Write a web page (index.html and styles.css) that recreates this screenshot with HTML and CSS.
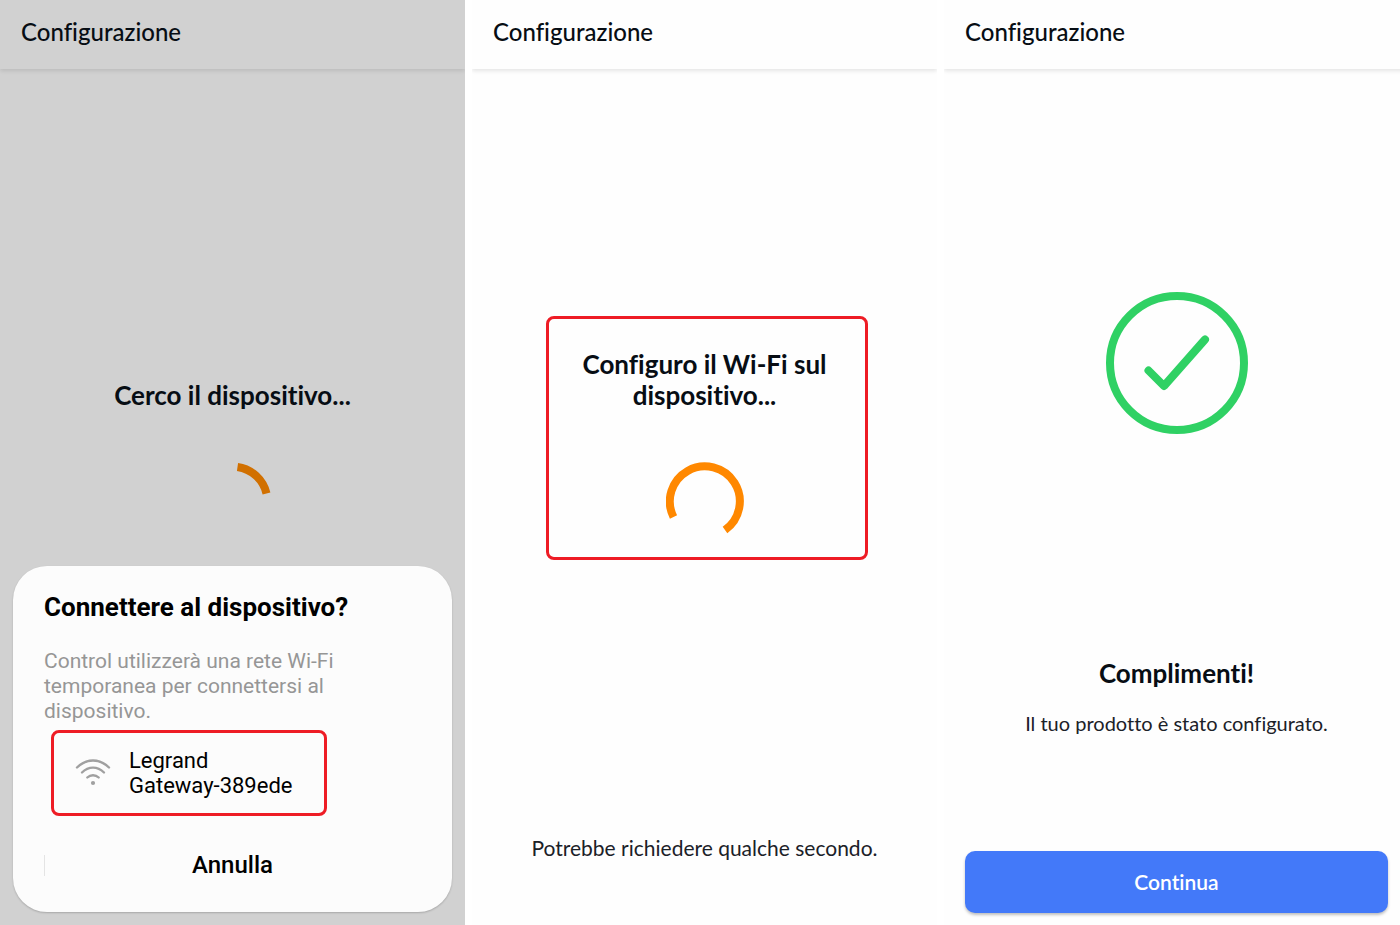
FILE: index.html
```html
<!DOCTYPE html>
<html lang="it">

<head>
    <meta charset="UTF-8">
    <meta name="viewport" content="width=device-width, initial-scale=1.0">
    <title>Configurazione</title>
    <link rel="stylesheet" href="styles.css">
</head>

<body>
    <div class="screens">

        <section class="screen dimmed">
            <header class="topbar">
                <h1>Configurazione</h1>
            </header>
            <div class="status">
                <h2>Cerco il dispositivo...</h2>
                <svg class="spinner" viewBox="0 0 78 78" fill="none" stroke="#d17000" stroke-width="8">
                    <path d="M43.5 5A35 35 0 0 1 72.5 31.5" />
                </svg>
            </div>

            <div class="sheet" role="dialog" aria-labelledby="sheet-title">
                <h2 id="sheet-title">Connettere al dispositivo?</h2>
                <p>Control utilizzerà una rete Wi-Fi temporanea per connettersi al dispositivo.</p>
                <button type="button" class="network highlight">
                    <svg class="wifi" viewBox="0 0 36 28" fill="none" stroke="#a0a0a0" stroke-width="2.4" stroke-linecap="round">
                        <path d="M2 8.500C11.500 -.8 24.500 -.8 34 8.500" />
                        <path d="M7 13.500C13.500 7 22.500 7 29 13.500" />
                        <path d="M12.300 18.500C15.500 15.400 20.500 15.400 23.700 18.500" />
                        <circle cx="18" cy="24" r="2.100" fill="#a0a0a0" stroke="none" />
                    </svg>
                    <span>Legrand<br>Gateway-389ede</span>
                </button>
                <div class="sheet-actions">
                    <button type="button">Annulla</button>
                </div>
            </div>
        </section>

        <section class="screen">
            <header class="topbar">
                <h1>Configurazione</h1>
            </header>
            <div class="status boxed highlight">
                <h2>Configuro il Wi-Fi sul dispositivo...</h2>
                <svg class="spinner" viewBox="0 0 78 78" fill="none" stroke="#ff8800" stroke-width="8">
                    <path d="M7.500 55A35 35 0 1 1 59 68" />
                </svg>
            </div>
            <p class="note">Potrebbe richiedere qualche secondo.</p>
        </section>

        <section class="screen">
            <header class="topbar">
                <h1>Configurazione</h1>
            </header>
            <svg class="check" viewBox="0 0 142 142" fill="none" stroke="#2fd164" stroke-width="8">
                <circle cx="71" cy="71" r="67" />
                <path d="M42.500 78.500L58 94L99 47.500" stroke-linecap="round" stroke-linejoin="round" />
            </svg>
            <div class="done">
                <h2>Complimenti!</h2>
                <p>Il tuo prodotto è stato configurato.</p>
            </div>
            <button type="button" class="continue">Continua</button>
        </section>

    </div>
</body>

</html>
```
FILE: styles.css
```css
* {
    padding: 0;
    margin: 0;
    box-sizing: border-box;
}

body {
    background-color: #fff;
    color: #070d14;
    font-family: Lato, "Liberation Sans", sans-serif;
    font-variant-ligatures: none;
    overflow-x: hidden;
}

button {
    border: none;
    background: none;
    font-family: inherit;
    font-variant-ligatures: none;
    color: inherit;
    cursor: pointer;
}

/* the last screen runs a little past the right edge */
.screens {
    display: grid;
    grid-template-columns: repeat(3, 1fr);
    gap: 7px;
    width: calc(100% + 9px);
    min-height: 100vh;
}

.screen {
    display: flex;
    flex-direction: column;
    background-color: #fefefe;
    overflow: hidden;
}

.dimmed {
    background-color: #d1d1d1;
}

.topbar {
    padding: 16px 21px 21px;
    box-shadow: 0 2px 4px rgba(0, 0, 0, 0.1);
}

.topbar h1 {
    font-size: 24px;
    line-height: 32px;
    font-weight: 500;
}

h2 {
    font-size: 26px;
    line-height: 31px;
    font-weight: 700;
}

.status {
    display: flex;
    flex-direction: column;
    align-items: center;
    gap: 51px;
    margin-top: 311px;
    text-align: center;
}

.spinner {
    width: 78px;
    height: 78px;
}

.highlight {
    border: 3px solid #ee1c25;
    border-radius: 8px;
}

.boxed {
    margin: 247px 69px 0 74px;
    padding: 30px 20px 17px 15px;
}

.sheet {
    margin: auto 13px 13px;
    padding: 23px 31px 30px;
    background-color: #fcfcfc;
    border-radius: 34px;
    box-shadow: 0 1px 2px rgba(0, 0, 0, 0.2);
    color: #000;
    font-family: Roboto, sans-serif;
}

.sheet h2 {
    line-height: 36px;
}

.sheet p {
    width: 300px;
    margin-top: 24px;
    font-size: 21px;
    line-height: 25px;
    color: #969696;
}

.network {
    display: flex;
    align-items: center;
    gap: 18px;
    width: 276px;
    margin: 6px 0 0 7px;
    padding: 15px 21px;
    font-size: 22px;
    line-height: 25px;
    text-align: left;
}

.wifi {
    width: 36px;
    height: 28px;
}

.sheet-actions {
    margin-top: 32px;
}

.sheet-actions button {
    width: 100%;
    font-size: 24px;
    line-height: 34px;
    font-weight: 500;
    background: linear-gradient(#e4e4e4, #e4e4e4) left center / 1px 21px no-repeat;
}

.note {
    margin: auto 0 61px;
    text-align: center;
}

.note,
.done p {
    font-size: 21px;
    line-height: 32px;
    color: #1b2128;
}

.check {
    align-self: center;
    width: 142px;
    height: 142px;
    margin-top: 223px;
}

.done {
    margin-top: 224px;
    text-align: center;
}

.done p {
    margin-top: 18px;
    font-size: 20px;
}

.continue {
    margin: auto 21px 12px;
    border-radius: 10px;
    background-color: #4379f9;
    box-shadow: 0 2px 3px rgba(0, 0, 0, 0.25);
    color: #fff;
    font-size: 21px;
    line-height: 62px;
    font-weight: 600;
}
```
